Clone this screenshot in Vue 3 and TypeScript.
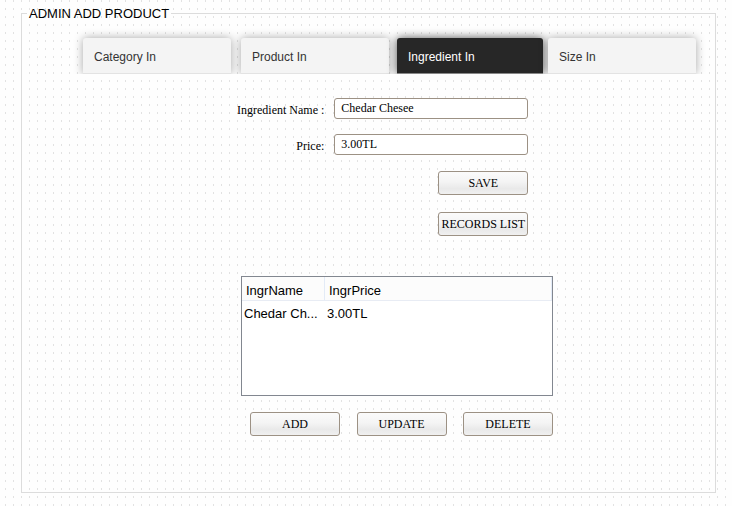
<script setup lang="ts">
import { ref } from 'vue'

interface Ingredient {
  name: string
  price: string
}

const tabs: string[] = ['Category In', 'Product In', 'Ingredient In', 'Size In']
const activeTab = ref('Ingredient In')

const name = ref('Chedar Chesee')
const price = ref('3.00TL')
const ingredients = ref<Ingredient[]>([{ name: 'Chedar Ch...', price: '3.00TL' }])
</script>

<template>
  <main class="page">
    <fieldset class="group">
      <legend class="group-title">ADMIN ADD PRODUCT</legend>

      <nav class="tabs">
        <button
          v-for="tab in tabs"
          :key="tab"
          type="button"
          class="tab"
          :class="{ active: tab === activeTab }"
          @click="activeTab = tab"
        >
          {{ tab }}
        </button>
      </nav>

      <div class="panel">
        <form class="form" @submit.prevent>
          <label class="label" for="ingredient-name">Ingredient Name :</label>
          <input id="ingredient-name" v-model="name" class="field" type="text" />
          <label class="label" for="ingredient-price">Price:</label>
          <input id="ingredient-price" v-model="price" class="field" type="text" />
          <div class="form-actions">
            <button type="submit" class="button">SAVE</button>
            <button type="button" class="button">RECORDS LIST</button>
          </div>
        </form>

        <div class="list">
          <table class="table">
            <thead>
              <tr>
                <th class="name-column">IngrName</th>
                <th>IngrPrice</th>
              </tr>
            </thead>
            <tbody>
              <tr v-for="item in ingredients" :key="item.name">
                <td>{{ item.name }}</td>
                <td>{{ item.price }}</td>
              </tr>
            </tbody>
          </table>
        </div>

        <div class="list-actions">
          <button type="button" class="button">ADD</button>
          <button type="button" class="button">UPDATE</button>
          <button type="button" class="button">DELETE</button>
        </div>
      </div>
    </fieldset>
  </main>
</template>

<style scoped>
.page {
  box-sizing: border-box;
  min-height: 100vh;
  padding: 5px 16px 13px 21px;
  background-color: #fefefe;
  background-image:
    linear-gradient(90deg, #fefefe 5px, transparent 5px, transparent 6px, #fefefe 6px),
    linear-gradient(#e2e2e2 2px, #fefefe 2px);
  background-size: 8px 8px;
  font-family: "Liberation Sans", Arial, sans-serif;
}

.group {
  min-width: 0;
  margin: 0;
  padding: 0 0 56px;
  border: 1px solid #dcdcdc;
}

.group-title {
  margin-left: 5px;
  padding: 0 2px;
  font-size: 13px;
  line-height: 17px;
  color: #000;
}

.tabs {
  display: grid;
  grid-template-columns: 158fr 156fr 151fr 148fr;
  padding: 16px 19px 0 61px;
}

.tab {
  width: 148px;
  height: 36px;
  padding: 2px 11px 0;
  border: 0;
  border-bottom: 1px solid #e3e3e3;
  border-radius: 3px 3px 0 0;
  background: #f4f4f4;
  box-shadow: 0 0 10px rgba(0, 0, 0, 0.35);
  clip-path: inset(-12px -12px 0 -12px);
  font-family: inherit;
  font-size: 12px;
  text-align: left;
  color: #333;
}

.tab.active {
  width: 146px;
  border-bottom-color: #888;
  background: #272727;
  box-shadow: 0 0 10px rgba(0, 0, 0, 0.7);
  color: #fff;
}

.panel {
  width: 316px;
  margin: 24px 0 0 215px;
}

.form {
  display: grid;
  grid-template-columns: 1fr 194px;
  gap: 15px 10px;
  align-items: center;
  padding-right: 27px;
  font-family: "Liberation Serif", "Times New Roman", serif;
}

.label {
  padding-top: 4px;
  font-size: 12px;
  line-height: 17px;
  text-align: right;
  white-space: nowrap;
  color: #000;
}

.field {
  box-sizing: border-box;
  width: 100%;
  height: 21px;
  padding: 0 6px;
  border: 1px solid #9c9184;
  border-radius: 3px;
  background: #fff;
  font-family: inherit;
  font-size: 12px;
  color: #000;
}

.form-actions {
  display: flex;
  grid-column: 2;
  flex-direction: column;
  gap: 17px;
  align-items: flex-end;
  padding-top: 1px;
}

.button {
  box-sizing: border-box;
  width: 90px;
  height: 24px;
  padding: 1px 0 0;
  border: 1px solid #9c9184;
  border-radius: 3px;
  background: linear-gradient(#fbfbfb, #f4f4f4 45%, #e9e9e9 75%, #f0f0f0);
  font-family: "Liberation Serif", "Times New Roman", serif;
  font-size: 12px;
  white-space: nowrap;
  color: #000;
}

.list {
  box-sizing: border-box;
  height: 120px;
  margin: 40px 0 0 4px;
  border: 1px solid #828790;
  background: #fff;
}

.table {
  width: 100%;
  border-collapse: separate;
  border-spacing: 0;
  table-layout: fixed;
  font-size: 13px;
  color: #000;
}

.name-column {
  width: 83px;
}

.table th,
.table td {
  box-sizing: border-box;
  height: 24px;
  padding: 1px 0 0 2px;
  overflow: hidden;
  text-align: left;
  text-overflow: ellipsis;
  white-space: nowrap;
}

.table th {
  padding-top: 3px;
  padding-left: 4px;
  border-right: 1px solid #e3ebf7;
  border-bottom: 1px solid #e8ecf4;
  background: #fcfcfc;
  font-weight: normal;
}

.list-actions {
  display: flex;
  justify-content: space-between;
  margin: 16px 0 0 13px;
}
</style>
